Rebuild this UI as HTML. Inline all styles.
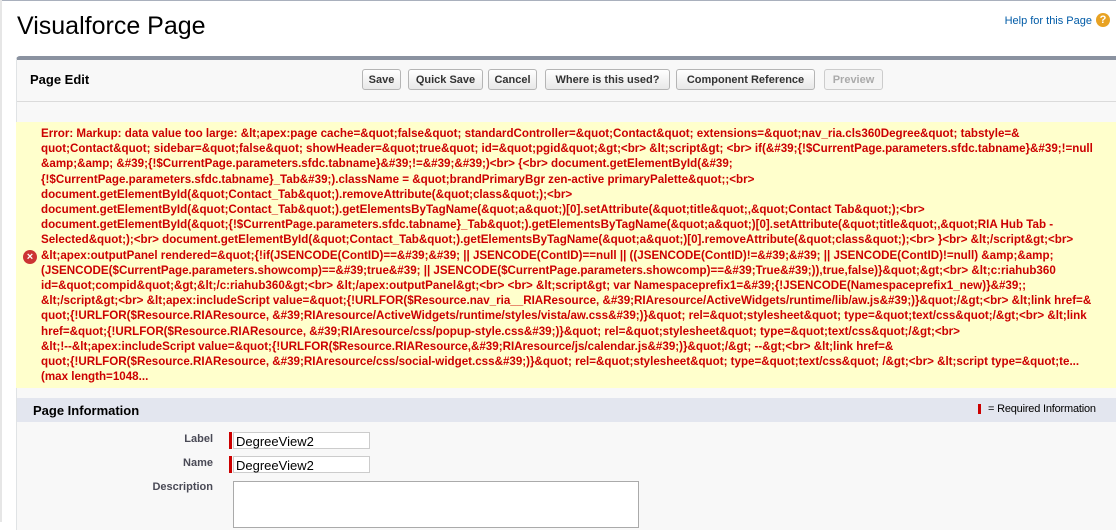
<!DOCTYPE html>
<html><head><meta charset="utf-8"><style>
body{margin:0;width:1116px;height:522px;overflow:hidden;background:#fff;font-family:"Liberation Sans",Arial,sans-serif;position:relative}
.abs{position:absolute}
h1{position:absolute;left:17px;top:12px;margin:0;font-weight:normal;font-size:25px;color:#000}
.help{position:absolute;right:24px;top:15px;font-size:11px;color:#015ba7}
.hicon{position:absolute;right:6px;top:13px;width:14px;height:14px;border-radius:50%;background:#e8a223;color:#fff;font-size:11px;font-weight:bold;text-align:center;line-height:14px}
.panel{position:absolute;left:16px;top:56px;width:1110px;height:470px;background:#f8f8f8;border-top:4px solid #8a92a0;border-left:1px solid #e0e3e5;border-radius:4px 0 0 0}
.btn{position:absolute;top:69px;height:21px;border:1px solid #b5b5b5;border-radius:3px;background:linear-gradient(#fff,#e8e8e8);font-size:11px;font-weight:bold;color:#333;line-height:20px;text-align:center;box-sizing:border-box}
.err{position:absolute;left:16px;top:122px;width:1100px;height:266px;background:#ffffcc}
.et{position:absolute;left:41px;top:126px;font-size:11.6px;font-weight:bold;color:#cc0000;line-height:15.2px;white-space:nowrap}
.lbl{position:absolute;font-size:11px;font-weight:bold;color:#4a4a56;text-align:right;width:100px}
.inp{position:absolute;left:233px;width:137px;height:17px;border:1px solid #ccc;background:#fff;font-size:13px;line-height:17px;padding-left:2px;box-sizing:border-box}
.req{position:absolute;left:229px;width:3px;height:17px;background:#c00}
</style></head><body>
<div class="abs" style="left:0;top:0;width:1116px;height:1px;background:#a9b0bd"></div>
<div class="abs" style="left:0;top:0;width:2px;height:522px;background:#e6e6e6"></div>
<h1>Visualforce Page</h1>
<div class="help">Help for this Page</div><div class="hicon">?</div>
<div class="panel"></div>
<div class="abs" style="left:30px;top:72px;font-size:13px;font-weight:bold;color:#000">Page Edit</div>
<div class="abs" style="left:17px;top:101px;width:1099px;height:1px;background:#dbdbdb"></div>
<div class="btn" style="left:362px;width:39px">Save</div>
<div class="btn" style="left:408px;width:75px">Quick Save</div>
<div class="btn" style="left:488px;width:49px">Cancel</div>
<div class="btn" style="left:545px;width:125px">Where is this used?</div>
<div class="btn" style="left:676px;width:139px">Component Reference</div>
<div class="btn" style="left:824px;width:59px;color:#aaa;border-color:#ccc;background:#f4f4f4">Preview</div>
<div class="err"></div>
<div class="abs" style="left:23px;top:250px;width:14px;height:14px;border-radius:50%;background:#c33;color:#fff;font-size:11px;font-weight:bold;text-align:center;line-height:14px">×</div>
<div class="et">
Error: Markup: data value too large: &amp;lt;apex:page cache=&amp;quot;false&amp;quot; standardController=&amp;quot;Contact&amp;quot; extensions=&amp;quot;nav_ria.cls360Degree&amp;quot; tabstyle=&amp;<br>
quot;Contact&amp;quot; sidebar=&amp;quot;false&amp;quot; showHeader=&amp;quot;true&amp;quot; id=&amp;quot;pgid&amp;quot;&amp;gt;&lt;br&gt; &amp;lt;script&amp;gt; &lt;br&gt; if(&amp;#39;{!$CurrentPage.parameters.sfdc.tabname}&amp;#39;!=null<br>
&amp;amp;&amp;amp; &amp;#39;{!$CurrentPage.parameters.sfdc.tabname}&amp;#39;!=&amp;#39;&amp;#39;)&lt;br&gt; {&lt;br&gt; document.getElementById(&amp;#39;<br>
{!$CurrentPage.parameters.sfdc.tabname}_Tab&amp;#39;).className = &amp;quot;brandPrimaryBgr zen-active primaryPalette&amp;quot;;&lt;br&gt;<br>
document.getElementById(&amp;quot;Contact_Tab&amp;quot;).removeAttribute(&amp;quot;class&amp;quot;);&lt;br&gt;<br>
document.getElementById(&amp;quot;Contact_Tab&amp;quot;).getElementsByTagName(&amp;quot;a&amp;quot;)[0].setAttribute(&amp;quot;title&amp;quot;,&amp;quot;Contact Tab&amp;quot;);&lt;br&gt;<br>
document.getElementById(&amp;quot;{!$CurrentPage.parameters.sfdc.tabname}_Tab&amp;quot;).getElementsByTagName(&amp;quot;a&amp;quot;)[0].setAttribute(&amp;quot;title&amp;quot;,&amp;quot;RIA Hub Tab -<br>
Selected&amp;quot;);&lt;br&gt; document.getElementById(&amp;quot;Contact_Tab&amp;quot;).getElementsByTagName(&amp;quot;a&amp;quot;)[0].removeAttribute(&amp;quot;class&amp;quot;);&lt;br&gt; }&lt;br&gt; &amp;lt;/script&amp;gt;&lt;br&gt;<br>
&amp;lt;apex:outputPanel rendered=&amp;quot;{!if(JSENCODE(ContID)==&amp;#39;&amp;#39; || JSENCODE(ContID)==null || ((JSENCODE(ContID)!=&amp;#39;&amp;#39; || JSENCODE(ContID)!=null) &amp;amp;&amp;amp;<br>
(JSENCODE($CurrentPage.parameters.showcomp)==&amp;#39;true&amp;#39; || JSENCODE($CurrentPage.parameters.showcomp)==&amp;#39;True&amp;#39;)),true,false)}&amp;quot;&amp;gt;&lt;br&gt; &amp;lt;c:riahub360<br>
id=&amp;quot;compid&amp;quot;&amp;gt;&amp;lt;/c:riahub360&amp;gt;&lt;br&gt; &amp;lt;/apex:outputPanel&amp;gt;&lt;br&gt; &lt;br&gt; &amp;lt;script&amp;gt; var Namespaceprefix1=&amp;#39;{!JSENCODE(Namespaceprefix1_new)}&amp;#39;;<br>
&amp;lt;/script&amp;gt;&lt;br&gt; &amp;lt;apex:includeScript value=&amp;quot;{!URLFOR($Resource.nav_ria__RIAResource, &amp;#39;RIAresource/ActiveWidgets/runtime/lib/aw.js&amp;#39;)}&amp;quot;/&amp;gt;&lt;br&gt; &amp;lt;link href=&amp;<br>
quot;{!URLFOR($Resource.RIAResource, &amp;#39;RIAresource/ActiveWidgets/runtime/styles/vista/aw.css&amp;#39;)}&amp;quot; rel=&amp;quot;stylesheet&amp;quot; type=&amp;quot;text/css&amp;quot;/&amp;gt;&lt;br&gt; &amp;lt;link<br>
href=&amp;quot;{!URLFOR($Resource.RIAResource, &amp;#39;RIAresource/css/popup-style.css&amp;#39;)}&amp;quot; rel=&amp;quot;stylesheet&amp;quot; type=&amp;quot;text/css&amp;quot;/&amp;gt;&lt;br&gt;<br>
&amp;lt;!--&amp;lt;apex:includeScript value=&amp;quot;{!URLFOR($Resource.RIAResource,&amp;#39;RIAresource/js/calendar.js&amp;#39;)}&amp;quot;/&amp;gt; --&amp;gt;&lt;br&gt; &amp;lt;link href=&amp;<br>
quot;{!URLFOR($Resource.RIAResource, &amp;#39;RIAresource/css/social-widget.css&amp;#39;)}&amp;quot; rel=&amp;quot;stylesheet&amp;quot; type=&amp;quot;text/css&amp;quot; /&amp;gt;&lt;br&gt; &amp;lt;script type=&amp;quot;te...<br>
(max length=1048...
</div>
<div class="abs" style="left:17px;top:398px;width:1099px;height:24px;background:#e3e6ef"></div>
<div class="abs" style="left:33px;top:403px;font-size:13px;font-weight:bold;color:#000">Page Information</div>
<div class="abs" style="left:978px;top:404px;width:3px;height:10px;background:#c00"></div>
<div class="abs" style="left:988px;top:403px;font-size:11px;color:#000;letter-spacing:-0.2px">= Required Information</div>
<div class="lbl" style="left:113px;top:433px">Label</div>
<div class="lbl" style="left:113px;top:457px">Name</div>
<div class="lbl" style="left:113px;top:481px">Description</div>
<div class="req" style="top:432px"></div><div class="inp" style="top:432px">DegreeView2</div>
<div class="req" style="top:456px"></div><div class="inp" style="top:456px">DegreeView2</div>
<div class="abs" style="left:233px;top:481px;width:404px;height:45px;border:1px solid #aaa;background:#fff"></div>
</body></html>
